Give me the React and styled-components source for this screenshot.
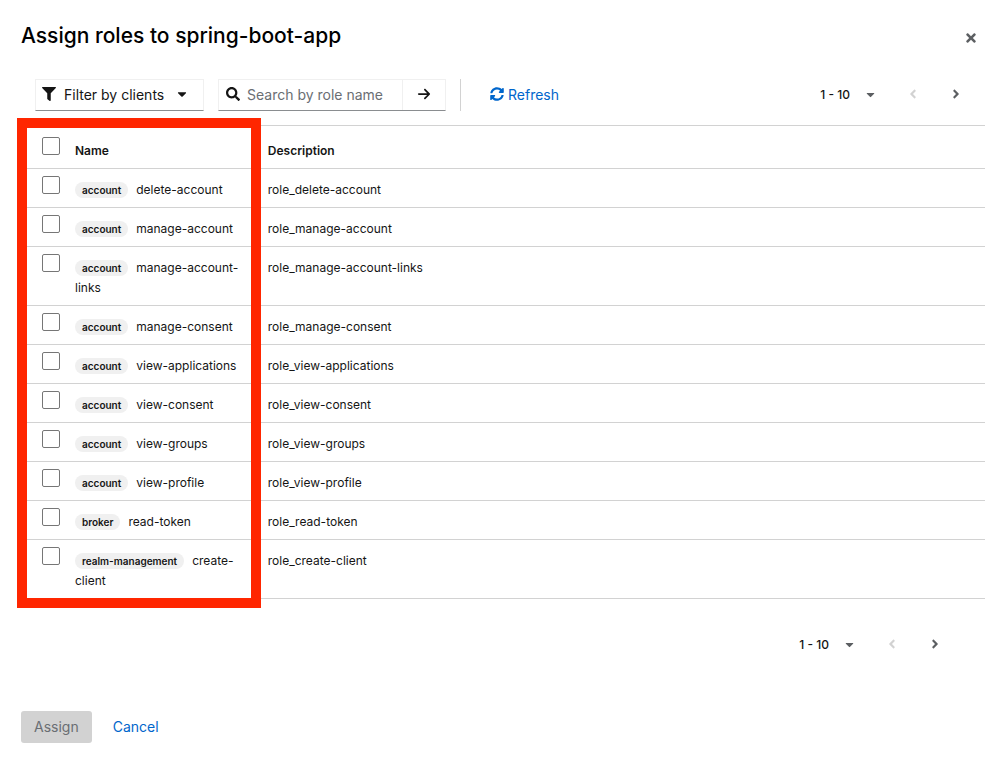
import { useState } from "react";
import styled, { createGlobalStyle } from "styled-components";
import {
  FaFilter,
  FaCaretDown,
  FaSearch,
  FaSyncAlt,
  FaTimes,
  FaAngleLeft,
  FaAngleRight,
} from "react-icons/fa";
import { FaArrowRight } from "react-icons/fa6";

const GlobalStyle = createGlobalStyle`
  * {
    box-sizing: border-box;
  }

  body {
    margin: 0;
    background: #fff;
    color: #151515;
    font-family: "Inter", "Liberation Sans", sans-serif;
    font-size: 12px;
  }

  button, input {
    font-family: inherit;
  }

  svg {
    display: block;
    flex-shrink: 0;
  }
`;

const Modal = styled.section`
  padding: 20px 22px 20px 21px;
`;

const Header = styled.header`
  display: flex;
  justify-content: space-between;
  height: 32px;
`;

const Title = styled.h1`
  margin: 0;
  font-size: 21px;
  line-height: 32px;
  font-weight: 500;
  color: #000;
`;

const IconButton = styled.button`
  display: flex;
  align-items: center;
  justify-content: center;
  width: ${(props) => props.$width || 28}px;
  height: 30px;
  padding: 0;
  border: 0;
  background: transparent;
  color: #5c5f62;

  &:disabled {
    color: #d2d2d2;
  }
`;

const CloseButton = styled(IconButton)`
  height: 36px;
`;

const Toolbar = styled.div`
  display: flex;
  align-items: center;
  margin-top: 27px;
  padding: 0 8px 0 14px;
`;

const FilterButton = styled.button`
  display: flex;
  align-items: center;
  width: 169px;
  height: 32px;
  padding: 0 14px 2px 6px;
  border: 1px solid #f0f0f0;
  border-bottom-color: #8a8d90;
  background: #fff;
  color: #151515;
  font-size: 14px;

  span {
    flex: 1;
    margin-left: 8px;
    text-align: left;
    white-space: nowrap;
  }
`;

const Search = styled.form`
  display: flex;
  width: 228px;
  height: 32px;
  margin-left: 14px;
  border: 1px solid #f0f0f0;
  border-bottom-color: #8a8d90;
`;

const SearchField = styled.label`
  display: flex;
  flex: 1;
  align-items: center;
  gap: 7px;
  padding: 0 0 2px 7px;
`;

const SearchInput = styled.input`
  width: 100%;
  min-width: 0;
  padding: 0;
  border: 0;
  outline: 0;
  background: transparent;
  color: #151515;
  font-size: 14px;

  &::placeholder {
    color: #6a6e73;
    opacity: 1;
  }
`;

const SearchSubmit = styled.button`
  display: flex;
  align-items: center;
  justify-content: center;
  width: 43px;
  padding: 0 0 2px;
  border: 0;
  border-left: 1px solid #f0f0f0;
  background: #fff;
  color: #151515;
`;

const Divider = styled.div`
  width: 1px;
  height: 32px;
  margin-left: 14px;
  background: #d2d2d2;
`;

const LinkButton = styled.button`
  display: flex;
  align-items: center;
  gap: 4px;
  height: 32px;
  margin-left: ${(props) => props.$indent}px;
  padding: 0 0 2px;
  border: 0;
  background: transparent;
  color: #06c;
  font-size: 14px;
`;

const PagerBox = styled.nav`
  display: flex;
  align-items: center;
  margin-left: auto;
  padding-bottom: 2px;
`;

const PagerMenu = styled.button`
  display: flex;
  align-items: center;
  gap: 14px;
  height: 30px;
  margin-right: 14px;
  padding: 0;
  border: 0;
  background: transparent;
  color: #151515;
  font-size: 12px;
  font-weight: 500;

  svg {
    color: #5c5f62;
  }
`;

const TableArea = styled.div`
  position: relative;
  margin-top: 14px;
`;

const Table = styled.table`
  width: 100%;
  table-layout: fixed;
  border-collapse: separate;
  border-spacing: 0;
  border-top: 1px solid #d2d2d2;
`;

const Col = styled.col`
  width: ${(props) => props.$width};
`;

const Th = styled.th`
  height: 43px;
  padding: 15px 12px 7px 0;
  border-bottom: 1px solid #d2d2d2;
  font-size: 12px;
  line-height: 20px;
  font-weight: 600;
  text-align: left;
  vertical-align: top;
`;

const Td = styled.td`
  padding: 11px 12px 7px 0;
  border-bottom: 1px solid #d2d2d2;
  font-size: 12px;
  line-height: 20px;
  vertical-align: top;
`;

const CheckTh = styled(Th)`
  padding: 11px 0 0 21px;
`;

const CheckTd = styled(Td)`
  padding: 7px 0 0 21px;
`;

const Checkbox = styled.input`
  display: block;
  appearance: none;
  width: 18px;
  height: 18px;
  margin: 0;
  border: 1px solid #767676;
  border-radius: 2px;
  background: #fff;

  &:checked {
    background: #06c;
  }
`;

const Badge = styled.span`
  display: inline-block;
  margin-right: 8px;
  padding: 0 7px;
  border-radius: 20px;
  background: #f0f0f0;
  font-size: 10px;
  line-height: 16px;
  font-weight: 600;
  text-align: center;
`;

const Highlight = styled.div`
  position: absolute;
  top: -7px;
  bottom: -9px;
  left: -4px;
  width: calc(20% + 51px);
  border: 10px solid #ff2600;
  pointer-events: none;
`;

const BottomBar = styled.div`
  display: flex;
  margin-top: 30px;
  padding-right: 29px;
`;

const Footer = styled.footer`
  display: flex;
  align-items: center;
  margin-top: 50px;
`;

const AssignButton = styled.button`
  height: 32px;
  padding: 0 13px 2px;
  border: 0;
  border-radius: 3px;
  background: #d2d2d2;
  color: #6a6e73;
  font-size: 14px;
`;

const roles = [
  { client: "account", name: "delete-account" },
  { client: "account", name: "manage-account" },
  { client: "account", name: "manage-account-links" },
  { client: "account", name: "manage-consent" },
  { client: "account", name: "view-applications" },
  { client: "account", name: "view-consent" },
  { client: "account", name: "view-groups" },
  { client: "account", name: "view-profile" },
  { client: "broker", name: "read-token" },
  { client: "realm-management", name: "create-client" },
];

const Pager = () => {
  return (
    <PagerBox aria-label="Pagination">
      <PagerMenu type="button">
        1 - 10
        <FaCaretDown size={13} />
      </PagerMenu>
      <IconButton type="button" aria-label="Previous page" $width={44} disabled>
        <FaAngleLeft size={14} />
      </IconButton>
      <IconButton type="button" aria-label="Next page" $width={42}>
        <FaAngleRight size={14} />
      </IconButton>
    </PagerBox>
  );
};

const App = () => {
  const [selected, setSelected] = useState([]);

  const toggle = (name) => {
    setSelected(
      selected.includes(name)
        ? selected.filter((item) => item !== name)
        : [...selected, name]
    );
  };

  const toggleAll = () => {
    setSelected(selected.length === roles.length ? [] : roles.map((r) => r.name));
  };

  return (
    <>
      <GlobalStyle />
      <Modal role="dialog" aria-labelledby="modal-title">
        <Header>
          <Title id="modal-title">Assign roles to spring-boot-app</Title>
          <CloseButton type="button" aria-label="Close">
            <FaTimes size={14} />
          </CloseButton>
        </Header>

        <Toolbar>
          <FilterButton type="button">
            <FaFilter size={14} />
            <span>Filter by clients</span>
            <FaCaretDown size={14} />
          </FilterButton>
          <Search onSubmit={(e) => e.preventDefault()}>
            <SearchField>
              <FaSearch size={14} />
              <SearchInput
                type="text"
                placeholder="Search by role name"
                aria-label="Search by role name"
              />
            </SearchField>
            <SearchSubmit type="submit" aria-label="Search">
              <FaArrowRight size={14} />
            </SearchSubmit>
          </Search>
          <Divider />
          <LinkButton type="button" $indent={29}>
            <FaSyncAlt size={14} />
            Refresh
          </LinkButton>
          <Pager />
        </Toolbar>

        <TableArea>
          <Table>
            <colgroup>
              <Col $width="54px" />
              <Col $width="20%" />
              <Col />
            </colgroup>
            <thead>
              <tr>
                <CheckTh>
                  <Checkbox
                    type="checkbox"
                    aria-label="Select all rows"
                    checked={selected.length === roles.length}
                    onChange={toggleAll}
                  />
                </CheckTh>
                <Th scope="col">Name</Th>
                <Th scope="col">Description</Th>
              </tr>
            </thead>
            <tbody>
              {roles.map((role) => (
                <tr key={role.name}>
                  <CheckTd>
                    <Checkbox
                      type="checkbox"
                      aria-label={"Select " + role.name}
                      checked={selected.includes(role.name)}
                      onChange={() => toggle(role.name)}
                    />
                  </CheckTd>
                  <Td>
                    <Badge>{role.client}</Badge>
                    {role.name}
                  </Td>
                  <Td>role_{role.name}</Td>
                </tr>
              ))}
            </tbody>
          </Table>
          <Highlight />
        </TableArea>

        <BottomBar>
          <Pager />
        </BottomBar>

        <Footer>
          <AssignButton type="button" disabled={selected.length === 0}>
            Assign
          </AssignButton>
          <LinkButton type="button" $indent={21}>
            Cancel
          </LinkButton>
        </Footer>
      </Modal>
    </>
  );
};

export default App;
